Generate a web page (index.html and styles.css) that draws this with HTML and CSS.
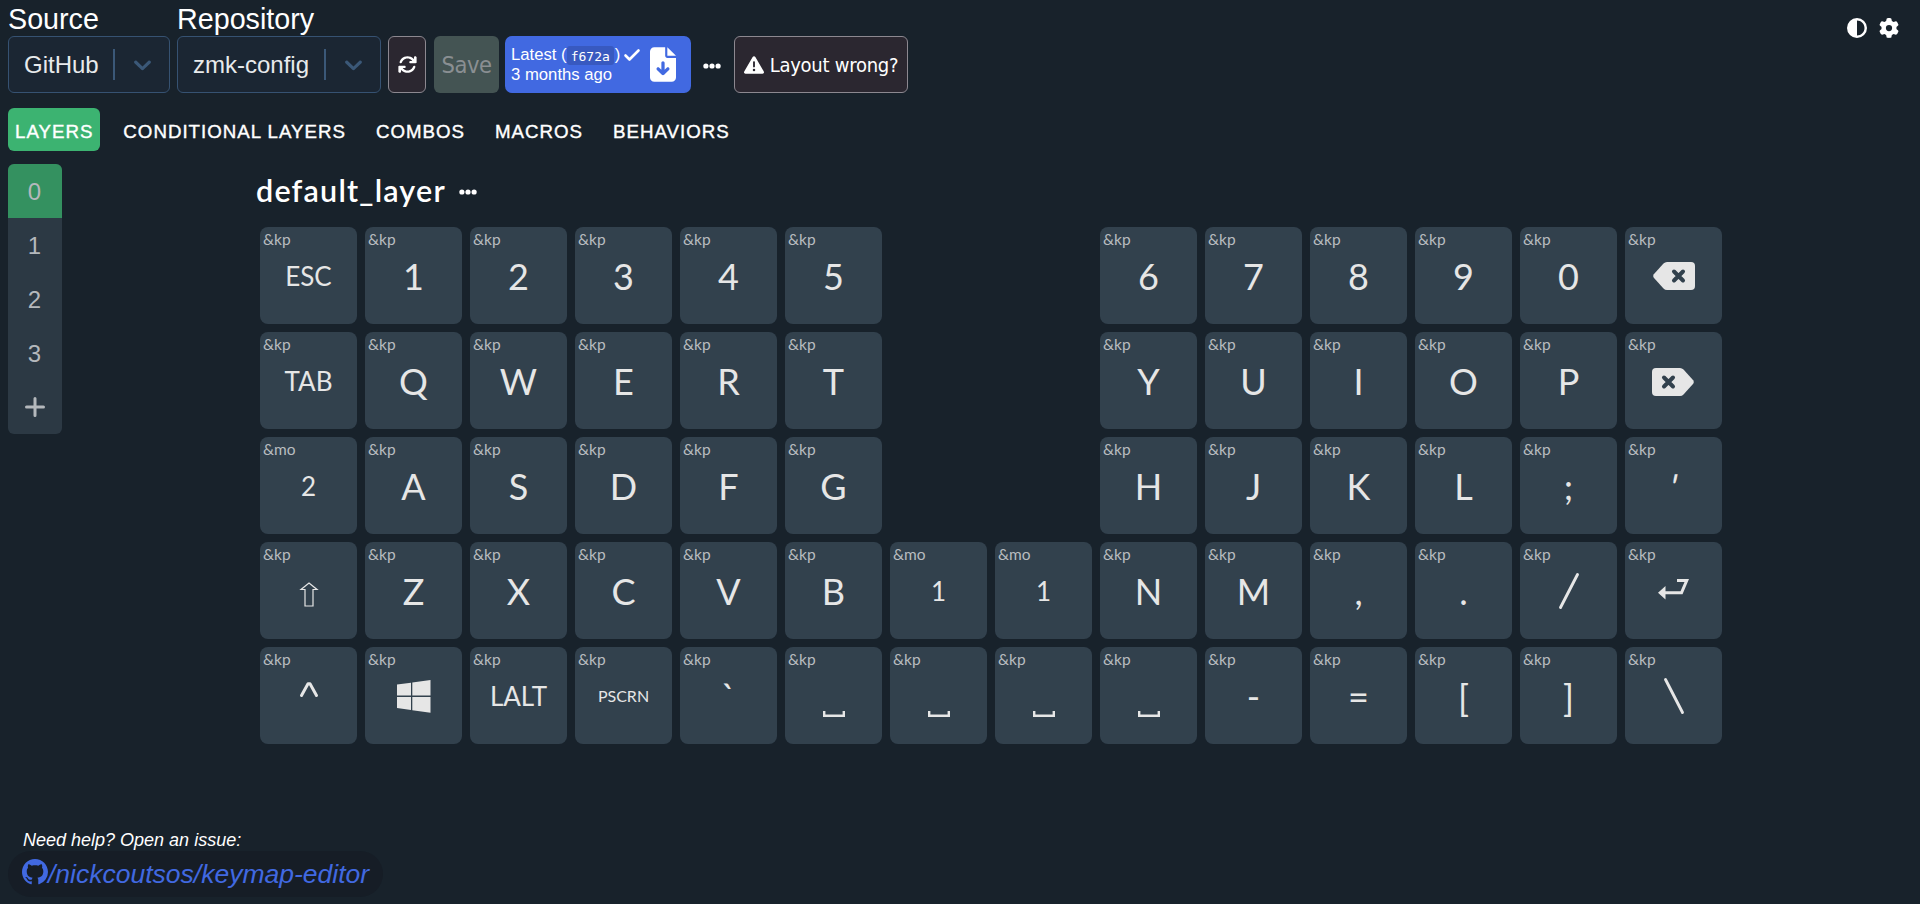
FILE: index.html
```html
<!DOCTYPE html>
<html lang="en">
<head>
<meta charset="utf-8">
<title>Keymap Editor</title>
<link rel="stylesheet" href="styles.css">
</head>
<body>
<svg width="0" height="0" class="defs">
  <symbol id="dots" viewBox="0 0 18 6"><circle cx="2.9" cy="3" r="2.6"/><circle cx="9" cy="3" r="2.6"/><circle cx="15.1" cy="3" r="2.6"/></symbol>
  <symbol id="chev" viewBox="0 0 20 20"><path d="M4.516 7.548c0.436-0.446 1.043-0.481 1.576 0l3.908 3.747 3.908-3.747c0.533-0.481 1.141-0.446 1.574 0 0.436 0.445 0.408 1.197 0 1.615-0.406 0.418-4.695 4.502-4.695 4.502-0.217 0.223-0.502 0.335-0.787 0.335s-0.57-0.112-0.789-0.335c0 0-4.287-4.084-4.695-4.502s-0.436-1.17 0-1.615z"/></symbol>
</svg>
<header class="topbar">
  <div class="field source"><label>Source</label>
    <div class="select"><span>GitHub</span><i></i><svg class="chev"><use href="#chev"/></svg></div></div>
  <div class="field repo"><label>Repository</label>
    <div class="select"><span>zmk-config</span><i></i><svg class="chev"><use href="#chev"/></svg></div></div>
  <button class="btn refresh"><svg viewBox="0 0 512 512"><path d="M105.1 202.600c7.700-21.800 20.200-42.300 37.800-59.800c62.500-62.500 163.800-62.500 226.300 0L386.300 160H336c-17.700 0-32 14.300-32 32s14.300 32 32 32H463.500c17.700 0 32-14.300 32-32V64c0-17.700-14.300-32-32-32s-32 14.300-32 32v51.200L414.400 97.600c-87.500-87.500-229.300-87.500-316.800 0C73.200 122 55.600 150.700 44.800 181.400c-5.900 16.700 2.900 34.900 19.500 40.800s34.900-2.900 40.800-19.500zM39 289.300c-5 1.500-9.800 4.200-13.700 8.200c-4 4-6.700 8.800-8.100 14c-1.200 4.300-1.200 7-1.200 8.500V448c0 17.700 14.300 32 32 32s32-14.300 32-32V396.900l17.600 17.500c87.500 87.400 229.300 87.400 316.700 0c24.400-24.400 42.100-53.100 52.900-83.700c5.900-16.700-2.900-34.900-19.500-40.800s-34.900 2.900-40.800 19.500c-7.700 21.800-20.200 42.300-37.800 59.800c-62.500 62.500-163.800 62.500-226.300 0L125.600 352H176c17.700 0 32-14.300 32-32s-14.300-32-32-32H48.400c-3.200 0-6.400 .3-9.400 1.300z"/><path d="M495 50V215H330ZM17 462V297H182Z"/></svg></button>
  <button class="btn save">Save</button>
  <a class="build">
    <span class="build-text"><span class="line">Latest (<code>f672a</code>)<svg class="check" viewBox="0 0 16 12"><path d="M1.500 6.500 5.500 10.500 14.500 1.500"/></svg></span><span>3 months ago</span></span>
    <svg class="file" viewBox="0 0 384 512"><path fill-rule="evenodd" d="M64 0C28.700 0 0 28.700 0 64V448c0 35.300 28.700 64 64 64H320c35.300 0 64-28.700 64-64V160H256c-17.700 0-32-14.300-32-32V0H64zM256 0V128H384L256 0zM216 232V334.100l31-31c9.400-9.400 24.600-9.400 33.900 0s9.400 24.600 0 33.900l-72 72c-9.400 9.400-24.600 9.400-33.900 0l-72-72c-9.400-9.400-9.400-24.600 0-33.900s24.600-9.400 33.900 0l31 31V232c0-13.300 10.700-24 24-24s24 10.700 24 24z"/></svg>
  </a>
  <svg class="dots more"><use href="#dots"/></svg>
  <button class="btn wrong"><svg viewBox="0 0 512 512"><path fill-rule="evenodd" d="M256 32c14.200 0 27.300 7.500 34.500 19.800l216 368c7.300 12.400 7.300 27.700 .2 40.100S486.300 480 472 480H40c-14.300 0-27.600-7.700-34.700-20.100s-7-27.800 .2-40.100l216-368C228.700 39.500 241.800 32 256 32zm0 128c-13.300 0-24 10.700-24 24V296c0 13.300 10.700 24 24 24s24-10.700 24-24V184c0-13.300-10.700-24-24-24zm32 224a32 32 0 1 0 -64 0 32 32 0 1 0 64 0z"/></svg><span>Layout wrong?</span></button>
  <div class="tools">
    <svg viewBox="0 0 512 512"><path fill-rule="evenodd" d="M448 256c0-106-86-192-192-192V448c106 0 192-86 192-192zM0 256a256 256 0 1 1 512 0A256 256 0 1 1 0 256z"/></svg>
    <svg viewBox="0 0 512 512"><path fill-rule="evenodd" d="M495.900 166.600c3.200 8.700 .5 18.400-6.400 24.600l-43.300 39.400c1.100 8.300 1.700 16.800 1.700 25.400s-.6 17.100-1.700 25.400l43.300 39.400c6.900 6.200 9.600 15.900 6.400 24.600c-4.400 11.900-9.700 23.300-15.800 34.300l-4.700 8.100c-6.600 11-14 21.400-22.100 31.200c-5.900 7.200-15.700 9.600-24.500 6.800l-55.700-17.700c-13.400 10.300-28.200 18.900-44 25.400l-12.500 57.100c-2 9.100-9 16.300-18.200 17.800c-13.800 2.300-28 3.500-42.500 3.500s-28.700-1.200-42.500-3.500c-9.200-1.500-16.200-8.700-18.200-17.800l-12.500-57.100c-15.800-6.500-30.600-15.100-44-25.400L83.100 425.900c-8.800 2.800-18.600 .3-24.500-6.800c-8.100-9.800-15.500-20.200-22.100-31.200l-4.700-8.100c-6.100-11-11.400-22.400-15.800-34.300c-3.200-8.700-.5-18.400 6.400-24.600l43.300-39.400C64.600 273.100 64 264.600 64 256s.6-17.100 1.700-25.400L22.400 191.200c-6.900-6.200-9.600-15.900-6.400-24.600c4.400-11.900 9.700-23.300 15.800-34.300l4.700-8.100c6.600-11 14-21.400 22.100-31.200c5.900-7.200 15.700-9.600 24.500-6.800l55.700 17.700c13.400-10.300 28.200-18.900 44-25.400l12.500-57.100c2-9.100 9-16.300 18.200-17.800C227.300 1.200 241.500 0 256 0s28.700 1.200 42.500 3.500c9.200 1.500 16.200 8.700 18.200 17.800l12.500 57.100c15.800 6.500 30.600 15.100 44 25.400l55.700-17.700c8.800-2.800 18.600-.3 24.500 6.800c8.100 9.800 15.500 20.200 22.100 31.200l4.700 8.100c6.100 11 11.400 22.400 15.800 34.300zM256 336a80 80 0 1 0 0-160 80 80 0 1 0 0 160z"/></svg>
  </div>
</header>
<nav class="tabs"><a class="tab active">LAYERS</a><a class="tab">CONDITIONAL LAYERS</a><a class="tab">COMBOS</a><a class="tab">MACROS</a><a class="tab">BEHAVIORS</a></nav>
<main class="main">
  <ul class="layers"><li class="active">0</li><li>1</li><li>2</li><li>3</li><li><svg viewBox="0 0 20 20"><path d="M10 1.500V18.500M1.500 10H18.500"/></svg></li></ul>
  <section class="board">
    <h2><span>default_layer</span><svg class="dots"><use href="#dots"/></svg></h2>
    <div class="keys">
      <div class="key"><em>&amp;kp</em><b class="md">ESC</b></div>
      <div class="key"><em>&amp;kp</em><b>1</b></div>
      <div class="key"><em>&amp;kp</em><b>2</b></div>
      <div class="key"><em>&amp;kp</em><b>3</b></div>
      <div class="key"><em>&amp;kp</em><b>4</b></div>
      <div class="key"><em>&amp;kp</em><b>5</b></div>
      <div class="key right"><em>&amp;kp</em><b>6</b></div>
      <div class="key"><em>&amp;kp</em><b>7</b></div>
      <div class="key"><em>&amp;kp</em><b>8</b></div>
      <div class="key"><em>&amp;kp</em><b>9</b></div>
      <div class="key"><em>&amp;kp</em><b>0</b></div>
      <div class="key"><em>&amp;kp</em><svg class="erase" viewBox="0 0 42 28"><path d="M14 0H38Q42 0 42 4V24Q42 28 38 28H14Q12 28 10.500 26.500L.8 15.800Q-.5 14 .8 12.200L10.500 1.500Q12 0 14 0Z"/><path class="x" d="M21 9.500 30 18.500M30 9.500 21 18.500"/></svg></div>

      <div class="key"><em>&amp;kp</em><b class="md">TAB</b></div>
      <div class="key"><em>&amp;kp</em><b>Q</b></div>
      <div class="key"><em>&amp;kp</em><b>W</b></div>
      <div class="key"><em>&amp;kp</em><b>E</b></div>
      <div class="key"><em>&amp;kp</em><b>R</b></div>
      <div class="key"><em>&amp;kp</em><b>T</b></div>
      <div class="key right"><em>&amp;kp</em><b>Y</b></div>
      <div class="key"><em>&amp;kp</em><b>U</b></div>
      <div class="key"><em>&amp;kp</em><b>I</b></div>
      <div class="key"><em>&amp;kp</em><b>O</b></div>
      <div class="key"><em>&amp;kp</em><b>P</b></div>
      <div class="key"><em>&amp;kp</em><svg class="erase del" viewBox="0 0 42 28"><path d="M28 0H4Q0 0 0 4V24Q0 28 4 28H28Q30 28 31.500 26.500L41.200 15.800Q42.500 14 41.200 12.200L31.500 1.500Q30 0 28 0Z"/><path class="x" d="M12 9.500 21 18.500M21 9.500 12 18.500"/></svg></div>

      <div class="key"><em>&amp;mo</em><b class="md">2</b></div>
      <div class="key"><em>&amp;kp</em><b>A</b></div>
      <div class="key"><em>&amp;kp</em><b>S</b></div>
      <div class="key"><em>&amp;kp</em><b>D</b></div>
      <div class="key"><em>&amp;kp</em><b>F</b></div>
      <div class="key"><em>&amp;kp</em><b>G</b></div>
      <div class="key right"><em>&amp;kp</em><b>H</b></div>
      <div class="key"><em>&amp;kp</em><b>J</b></div>
      <div class="key"><em>&amp;kp</em><b>K</b></div>
      <div class="key"><em>&amp;kp</em><b>L</b></div>
      <div class="key"><em>&amp;kp</em><b>;</b></div>
      <div class="key"><em>&amp;kp</em><b class="quote">'</b></div>

      <div class="key"><em>&amp;kp</em><svg class="shift" viewBox="0 0 18 25"><path d="M9 1 17 7.500H13V24H5V7.500H1Z"/></svg></div>
      <div class="key"><em>&amp;kp</em><b>Z</b></div>
      <div class="key"><em>&amp;kp</em><b>X</b></div>
      <div class="key"><em>&amp;kp</em><b>C</b></div>
      <div class="key"><em>&amp;kp</em><b>V</b></div>
      <div class="key"><em>&amp;kp</em><b>B</b></div>
      <div class="key"><em>&amp;mo</em><b class="md">1</b></div>
      <div class="key"><em>&amp;mo</em><b class="md">1</b></div>
      <div class="key"><em>&amp;kp</em><b>N</b></div>
      <div class="key"><em>&amp;kp</em><b>M</b></div>
      <div class="key"><em>&amp;kp</em><b>,</b></div>
      <div class="key"><em>&amp;kp</em><b>.</b></div>
      <div class="key"><em>&amp;kp</em><svg class="slash" viewBox="0 0 20 36"><path d="M1.500 34.500 18.500 1.500"/></svg></div>
      <div class="key"><em>&amp;kp</em><svg class="enter" viewBox="0 0 31 21"><path d="M19 0H31L24.500 15.200H7.500V20.500L0 13.700 7.500 7V12.300H22.500L26.500 3H19Z"/></svg></div>

      <div class="key"><em>&amp;kp</em><svg class="ctrl" viewBox="0 0 18 15"><path d="M1.500 13.500 8 1.800H10L16.500 13.500"/></svg></div>
      <div class="key"><em>&amp;kp</em><svg class="win" viewBox="0 0 34 33"><path d="M0 4.500 14 2.700V15.600H0ZM15.300 2.500 33.500 0V15.600H15.300ZM0 17H14V30L0 28.100ZM15.300 17H33.500V32.700L15.300 30.200Z"/></svg></div>
      <div class="key"><em>&amp;kp</em><b class="md">LALT</b></div>
      <div class="key"><em>&amp;kp</em><b class="sm">PSCRN</b></div>
      <div class="key"><em>&amp;kp</em><b class="grave">`</b></div>
      <div class="key"><em>&amp;kp</em><svg class="space" viewBox="0 0 22 6"><path d="M1.200 0V4.800H20.800V0"/></svg></div>
      <div class="key"><em>&amp;kp</em><svg class="space" viewBox="0 0 22 6"><path d="M1.200 0V4.800H20.800V0"/></svg></div>
      <div class="key"><em>&amp;kp</em><svg class="space" viewBox="0 0 22 6"><path d="M1.200 0V4.800H20.800V0"/></svg></div>
      <div class="key"><em>&amp;kp</em><svg class="space" viewBox="0 0 22 6"><path d="M1.200 0V4.800H20.800V0"/></svg></div>
      <div class="key"><em>&amp;kp</em><b>-</b></div>
      <div class="key"><em>&amp;kp</em><b>=</b></div>
      <div class="key"><em>&amp;kp</em><b class="bracket">[</b></div>
      <div class="key"><em>&amp;kp</em><b class="bracket">]</b></div>
      <div class="key"><em>&amp;kp</em><svg class="slash" viewBox="0 0 20 36"><path d="M1.500 1.500 18.500 34.500"/></svg></div>
    </div>
  </section>
</main>
<footer class="help">
  <p>Need help? Open an issue:</p>
  <a><svg viewBox="0 0 16 16"><path d="M8 0C3.580 0 0 3.580 0 8c0 3.540 2.290 6.530 5.470 7.590.4.070.55-.17.55-.38 0-.19-.01-.82-.01-1.490-2.010.37-2.530-.49-2.690-.94-.09-.23-.48-.94-.82-1.130-.28-.15-.68-.52-.01-.53.63-.01 1.080.58 1.230.82.72 1.210 1.870.87 2.330.66.070-.52.28-.87.51-1.070-1.780-.2-3.640-.89-3.640-3.950 0-.87.31-1.590.82-2.150-.08-.2-.36-1.020.08-2.120 0 0 .67-.21 2.200.82.64-.18 1.320-.27 2-.27s1.360.09 2 .27c1.530-1.040 2.200-.82 2.200-.82.44 1.100.16 1.920.08 2.120.51.56.82 1.270.82 2.150 0 3.070-1.870 3.750-3.650 3.950.29.25.54.73.54 1.480 0 1.070-.01 1.930-.01 2.200 0 .21.15.46.55.38A8.010 8.010 0 0 0 16 8c0-4.420-3.580-8-8-8z"/></svg>/nickcoutsos/keymap-editor</a>
</footer>
</body>
</html>
```
FILE: styles.css
```css
* { box-sizing: border-box; }
body { margin: 0; height: 904px; padding: 0 8px; overflow: hidden; background: #18222b; color: #fff; font-family: "Liberation Sans", Arial, sans-serif; display: flex; flex-direction: column; }
svg { display: block; fill: currentColor; flex: none; overflow: visible; }
.defs { position: absolute; }
.topbar { display: flex; align-items: flex-end; height: 93px; }
.field label { display: block; font-size: 28.700px; line-height: 39px; height: 36px; }
.select { display: flex; align-items: center; height: 57px; padding: 0 14px 0 15px; border: 1px solid #365272; border-radius: 6px; background: #1b2633; font-size: 24px; color: #e8eaec; }
.select i { width: 2px; height: 31px; margin-left: auto; background: #3b5878; }
.select .chev { width: 29px; height: 29px; margin-left: 13px; margin-right: -2px; color: #3b5878; }
.source { width: 162px; }
.repo { width: 204px; margin-left: 7px; }
.btn { height: 57px; padding: 0; display: flex; align-items: center; justify-content: center; border: 1px solid #8c8890; border-radius: 6px; background: #2b2730; color: #fff; }
.refresh { width: 38px; margin-left: 7px; }
.refresh svg { width: 19px; height: 19px; }
.save { width: 65px; margin-left: 8px; border: 0; background: #445453; color: #8a8f92; font: 23.500px "DejaVu Sans Condensed", sans-serif; letter-spacing: -.5px; }
.build { display: flex; width: 186px; height: 57px; margin-left: 6px; border-radius: 7px; background: #4169e1; padding: 9px 15px 0 6px; font-size: 16.700px; line-height: 20px; justify-content: space-between; }
.build-text { display: flex; flex-direction: column; white-space: nowrap; }
.line { display: flex; align-items: center; height: 20px; white-space: pre; }
.build code { display: block; height: 19px; margin-right: 1px; padding: 0 4px; border-radius: 3px; background: #3859c0; font: 13px/21px "DejaVu Sans Mono", monospace; }
.check { width: 16px; height: 12px; margin-left: 4px; fill: none; stroke: #fff; stroke-width: 2.600; stroke-linecap: round; stroke-linejoin: round; }
.file { width: 26px; height: 35px; margin-top: 2px; }
.dots { width: 18px; height: 6px; }
.more { margin: 0 13px 24px 12px; }
.wrong { width: 174px; gap: 6px; font: 20px "DejaVu Sans Condensed", sans-serif; letter-spacing: -.25px; }
.wrong svg { width: 20px; height: 20px; }
.tools { display: flex; gap: 12px; margin: 0 13px 55px auto; }
.tools svg { width: 20px; height: 20px; }
.tabs { display: flex; gap: 16px; margin-top: 15px; height: 43px; }
.tab { padding: 0 7px; border-radius: 6px; font-size: 18.700px; line-height: 47px; letter-spacing: 1px; -webkit-text-stroke: .4px #fff; white-space: nowrap; }
.active { background: #3cb371; }
.main { display: flex; align-items: flex-start; margin-top: 13px; }
.layers { width: 54px; margin: 0; padding: 0; list-style: none; border-radius: 6px; overflow: hidden; background: #2c3944; color: #b4b8bc; font-size: 24px; line-height: 30px; }
.layers li { height: 54px; padding: 1px 1px 0 0; display: flex; align-items: center; justify-content: center; }
.layers .active { background: #349160; }
.layers svg { width: 20px; height: 20px; margin-bottom: 2px; fill: none; stroke: currentColor; stroke-width: 3; stroke-linecap: round; }
.board { margin-left: 194px; font-family: Lato, sans-serif; }
h2 { display: flex; align-items: center; gap: 13px; height: 55px; margin: 0 0 8px; font-size: 30.500px; letter-spacing: 1.200px; font-weight: 600; line-height: 52px; }
h2 span { height: 55px; }
.keys { display: grid; grid-template-columns: repeat(14, 97px); grid-auto-rows: 97px; gap: 8px; margin-left: 4px; }
.key { display: grid; place-items: center; border-radius: 8px; background: #32414d; color: #e6e6e6; }
.key > * { grid-area: 1 / 1; }
.key.right { grid-column: 9; }
.key em { place-self: start; margin: 2px 0 0 3px; font-size: 15.500px; line-height: 20px; font-style: normal; color: #b9bdc0; }
.key b { font-weight: 400; font-size: 36px; line-height: 40px; margin-bottom: -1px; }
.key .md { font-size: 26px; margin-bottom: -1px; }
.key .sm { font-size: 16px; margin-bottom: 0; }
.key .bracket { margin-bottom: -5px; }
.key .quote { transform: skewX(-12deg); }
.key svg { fill: currentColor; }
.erase { width: 42px; height: 28px; }
.erase.del { margin: 2px 1px 0 0; }
.shift { width: 18px; height: 25px; margin-top: 7px; }
.key .shift, .key .ctrl, .key .slash, .key .space { fill: none; stroke: currentColor; }
.key .erase .x { fill: none; stroke: #32414d; stroke-width: 4; stroke-linecap: round; }
.shift { stroke-width: 1.200; }
.enter { width: 31px; height: 21px; margin-bottom: 3px; }
.ctrl { width: 18px; height: 15px; margin-bottom: 12px; stroke-width: 3; stroke-linejoin: round; stroke-linecap: round; }
.win { width: 34px; height: 33px; margin-top: 1px; }
.slash { width: 20px; height: 36px; margin-top: 1px; stroke-width: 2.900; stroke-linecap: round; }
.space { width: 22px; height: 6px; margin-top: 37px; stroke-width: 2.400; }
.help { margin-top: auto; height: 79px; font-style: italic; }
.help p { margin: 0 0 0 15px; height: 26px; font-size: 18px; line-height: 30px; }
.help a { display: flex; align-items: center; width: 375px; height: 46px; padding-left: 14px; border-radius: 23px; background: #161d26; color: #4169e1; font-size: 26.500px; white-space: nowrap; }
.help svg { width: 26px; height: 26px; margin-top: -4px; }
```
